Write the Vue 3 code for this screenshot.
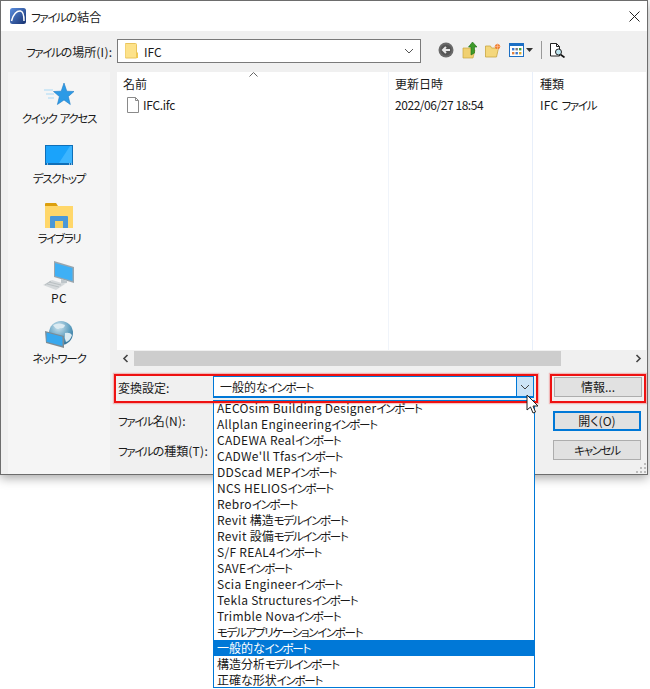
<script setup>
import { h } from 'vue'

const T = (props) =>
  (props.text.match(/[\u30A0-\u30FF]+|[\x20-\x7E]+|[^\u30A0-\u30FF\x20-\x7E]+/g) || []).map((run) => {
    if (/^[\u30A0-\u30FF]/.test(run)) return h('span', { class: 'kana' }, run)
    if (/^[\x20-\x7E]/.test(run)) return h('span', { class: 'latin' }, run)
    return h('span', run)
  })
T.props = ['text']

const places = [
  { label: 'クイック アクセス', icon: 'star' },
  { label: 'デスクトップ', icon: 'desk' },
  { label: 'ライブラリ', icon: 'lib' },
  { label: 'PC', icon: 'pc' },
  { label: 'ネットワーク', icon: 'net' }
]
const options = [
  'AECOsim Building Designerインポート', 'Allplan Engineeringインポート', 'CADEWA Realインポート',
  "CADWe'll Tfasインポート", 'DDScad MEPインポート', 'NCS HELIOSインポート', 'Rebroインポート',
  'Revit 構造モデルインポート', 'Revit 設備モデルインポート', 'S/F REAL4インポート', 'SAVEインポート',
  'Scia Engineerインポート', 'Tekla Structuresインポート', 'Trimble Novaインポート',
  'モデルアプリケーションインポート', '一般的なインポート', '構造分析モデルインポート', '正確な形状インポート'
]
</script>

<template>
  <div class="page">
    <div class="window">
      <header class="titlebar">
        <svg width="16" height="16" viewBox="0 0 16 16" class="appicon">
          <defs><linearGradient id="ag" x1="0" y1="0" x2="1" y2="1"><stop offset="0" stop-color="#5b8fe0"/><stop offset="1" stop-color="#16306e"/></linearGradient></defs>
          <rect width="16" height="16" rx="2.5" fill="url(#ag)"/>
          <path d="M1.500 13 C3 6 7 2.500 10.500 3 C13 3.400 14 7 14 13" fill="none" stroke="#fff" stroke-width="1.500"/>
        </svg>
        <span class="title"><T text="ファイルの結合" /></span>
        <svg class="close" width="11" height="11" viewBox="0 0 11 11"><path d="M.5.5l10 10M10.500.5l-10 10" stroke="#222" stroke-width="1"/></svg>
      </header>

      <div class="content">
        <div class="toolbar">
          <span class="loclabel"><T text="ファイルの場所(I):" /></span>
          <div class="locbox">
            <svg width="13" height="16" viewBox="0 0 13 16"><path d="M0 1.500Q0 .5 1 .5h9.500q1 0 1 1V15H1q-1 0-1-1z" fill="#fde28a" stroke="#e9c45c"/><path d="M11.500 9.500H13V15h-2z" fill="#f0c850"/></svg>
            <span class="locname">IFC</span>
            <svg class="chev" width="10" height="6" viewBox="0 0 10 6"><path d="M1 1l4 4 4-4" fill="none" stroke="#555" stroke-width="1"/></svg>
          </div>
          <div class="tools">
            <svg width="16" height="16" viewBox="0 0 16 16"><circle cx="8" cy="8" r="7.500" fill="#6a6a6a"/><circle cx="8" cy="8" r="5.500" fill="#555"/><path d="M12 8H6M8 5L5 8l3 3" fill="none" stroke="#e8e8e8" stroke-width="2"/></svg>
            <svg width="15" height="17" viewBox="0 0 15 17"><path d="M1 6h8l1 2h3l-2 8H1z" fill="#f0d070" stroke="#c9a640" stroke-width=".7"/><path d="M9 13V5H6.500L10.500 0 15 5h-2.500v6z" fill="#3d9a2a" stroke="#1f6f16" stroke-width=".6"/></svg>
            <svg width="16" height="15" viewBox="0 0 16 15"><path d="M.5 3h5l1 2h7l-2 9H.5z" fill="#f4d77c" stroke="#c9a640" stroke-width=".8"/><circle cx="12.500" cy="3.500" r="2.600" fill="#f08030"/><path d="M12.500 0v7M9 3.500h7" stroke="#fbc0a0" stroke-width=".6"/></svg>
            <span class="viewbtn">
              <svg width="15" height="14" viewBox="0 0 15 14"><rect x=".5" y=".5" width="14" height="13" fill="#fff" stroke="#1c6fc4"/><rect x="0" y="0" width="15" height="3" fill="#1c6fc4"/><rect x="3" y="5" width="2.400" height="2.400" fill="#3a78d0"/><rect x="6.500" y="5" width="2.400" height="2.400" fill="#7a7a7a"/><rect x="10" y="5" width="2.400" height="2.400" fill="#43a043"/><rect x="3" y="9" width="2.400" height="2.400" fill="#e08040"/><rect x="6.500" y="9" width="2.400" height="2.400" fill="#3a78d0"/><rect x="10" y="9" width="2.400" height="2.400" fill="#d9a830"/></svg>
              <svg width="7" height="4" viewBox="0 0 7 4"><path d="M0 0h7L3.500 4z" fill="#333"/></svg>
            </span>
            <span class="sep"></span>
            <svg width="16" height="15" viewBox="0 0 16 15"><path d="M.5.500h6l3 3V13H.5z" fill="#fff" stroke="#222"/><path d="M6.500.5v3h3" fill="none" stroke="#222"/><circle cx="8.500" cy="9" r="3" fill="#bfe6f0" stroke="#222"/><path d="M10.500 11.500l4 3" stroke="#111" stroke-width="1.600"/></svg>
          </div>
        </div>

        <div class="main">
          <nav class="sidebar">
            <div v-for="p in places" :key="p.label" class="place">
              <div class="placeicon">
                <svg v-if="p.icon === 'star'" width="31" height="26" viewBox="0 0 31 26"><path d="M0 8h9M2 12h8M4 16h6" stroke="#a9d9f5" stroke-width="1.200"/><path d="M20 1l2.800 8.200 7.200.3-5.700 5 2 8L20 18l-6.600 4.500 2-8L9.500 9.500l7.700-.3z" fill="#2c9ae6" stroke="#1e7cc6" stroke-width=".6"/></svg>
                <svg v-else-if="p.icon === 'desk'" width="28" height="20" viewBox="0 0 28 20"><rect width="28" height="20" fill="#0f6fb8"/><rect x="1" y="1" width="26" height="17" fill="#1aa3fb"/><path d="M14 18L25 1h2v17z" fill="#3cb5ff"/><path d="M2 19h1M24 19h1M26 19h1" stroke="#fff"/></svg>
                <svg v-else-if="p.icon === 'lib'" width="28" height="25" viewBox="0 0 28 25"><path d="M0 1q0-1 1-1h10l2 3h-13z" fill="#dc9f0e"/><rect x="0" y="3" width="28" height="22" fill="#ffd76a"/><path d="M5 25V14q0-1 1-1h16q1 0 1 1v11z" fill="#4a98d8"/><rect x="10" y="18" width="8" height="7" fill="#f6d160"/></svg>
                <svg v-else-if="p.icon === 'pc'" width="32" height="29" viewBox="0 0 32 29"><path d="M11 0l20 6v16l-20-6z" fill="#9aa6ae"/><path d="M12 2l17.500 5v13L12 15z" fill="#3fb0f5"/><path d="M18 18l6 2v2l-6 1z" fill="#bfc6ca"/><path d="M9 19l13 4-9 6L0 24z" fill="#d5d9db"/><path d="M6 21l12 3M4 23l12 3M8 20l-6 4" stroke="#aeb4b8" stroke-width=".7"/></svg>
                <svg v-else width="28" height="28" viewBox="0 0 28 28"><defs><radialGradient id="gl" cx=".4" cy=".25" r=".8"><stop offset="0" stop-color="#cfe4ee"/><stop offset=".6" stop-color="#5f9fc0"/><stop offset="1" stop-color="#2f6f96"/></radialGradient></defs><circle cx="16" cy="12" r="12" fill="url(#gl)"/><path d="M8 4q6-3 12 0-1 4-5 3-3 3-7-3zM20 12q5-1 7 2-2 6-6 7-2-4-1-9z" fill="#dcebf2"/><path d="M0 10l19 5v12L1 22z" fill="#7f8c94"/><path d="M1.500 11.500l16 4.300v9.200l-16-4.200z" fill="#38a8ee"/></svg>
              </div>
              <span class="placelabel"><T :text="p.label" /></span>
            </div>
          </nav>

          <div class="right">
            <div class="list">
              <svg class="sortcaret" width="9" height="5" viewBox="0 0 9 5"><path d="M.5 4.500L4.500.5l4 4" fill="none" stroke="#666"/></svg>
              <div class="cols heads">
                <span class="c1">名前</span><span class="c2">更新日時</span><span class="c3">種類</span>
              </div>
              <div class="cols row">
                <span class="c1 fname">
                  <svg width="12" height="16" viewBox="0 0 12 16"><path d="M.5.500h8l3 3v12H.5z" fill="#fff" stroke="#8a8a8a"/><path d="M8.500.5v3h3" fill="none" stroke="#8a8a8a"/></svg>
                  IFC.ifc
                </span>
                <span class="c2 date">2022/06/27 18:54</span><span class="c3"><T text="IFC ファイル" /></span>
              </div>
            </div>
            <div class="hscroll">
              <svg width="7" height="9" viewBox="0 0 7 9"><path d="M5.500 1L2 4.500 5.500 8" fill="none" stroke="#444" stroke-width="1.600"/></svg>
              <div class="track"><div class="thumb"></div></div>
              <svg width="7" height="9" viewBox="0 0 7 9"><path d="M1.500 1L5 4.500 1.500 8" fill="none" stroke="#444" stroke-width="1.600"/></svg>
            </div>
            <div class="form">
              <div class="fields">
                <div class="frow first">
                  <span class="flabel strong">変換設定:</span>
                  <div class="combo">
                    <span class="combotext"><T text="一般的なインポート" /></span>
                    <span class="combobtn"><svg width="10" height="6" viewBox="0 0 10 6"><path d="M1 1l4 4 4-4" fill="none" stroke="#444"/></svg></span>
                  </div>
                </div>
                <div class="frow"><span class="flabel"><T text="ファイル名(N):" /></span></div>
                <div class="frow"><span class="flabel"><T text="ファイルの種類(T):" /></span></div>
              </div>
              <div class="buttons">
                <button class="btn info">情報...</button>
                <button class="btn primary">開く(O)</button>
                <button class="btn last"><T text="キャンセル" /></button>
              </div>
            </div>
          </div>
        </div>
        <svg class="grip" width="10" height="10" viewBox="0 0 10 10"><path d="M8 0h2v2H8zM4 4h2v2H4zM8 4h2v2H8zM0 8h2v2H0zM4 8h2v2H4zM8 8h2v2H8z" fill="#bdbdbd"/></svg>
      </div>
    </div>

    <ul class="dropdown">
      <li v-for="o in options" :key="o" :class="{ sel: o === '一般的なインポート' }"><T :text="o" /></li>
    </ul>
    <div class="mark mark1"></div>
    <div class="mark mark2"></div>
    <svg class="cursor" width="14" height="20" viewBox="0 0 14 20"><path d="M1 1v15l3.500-3 2.500 6 2.500-1-2.500-6H12z" fill="#fff" stroke="#222"/></svg>
  </div>
</template>

<style>
html, body { margin: 0; background: #fff; }
.kana { font-size: 11.5px; letter-spacing: -1.3px; }
.latin { letter-spacing: .3px; }
</style>

<style scoped>
.page {
  position: relative;
  width: 650px;
  height: 689px;
  overflow: hidden;
  background: #fff;
  font-family: "Noto Sans CJK JP", "Liberation Sans", sans-serif;
  font-feature-settings: "palt";
  font-size: 12px;
  color: #1a1a1a;
}
.window {
  width: 648px;
  height: 475px;
  box-sizing: border-box;
  border: 1px solid #6d6d6d;
  display: flex;
  flex-direction: column;
  box-shadow: 0 3px 10px rgba(0, 0, 0, .35);
  background: #f0f0f0;
}
.titlebar {
  height: 30px;
  flex: none;
  background: #fff;
  display: flex;
  align-items: center;
  padding: 0 7px 0 9px;
}
.title { margin-left: 5px; font-size: 12px; }
.close { margin-left: auto; }
.content { flex: 1; position: relative; display: flex; flex-direction: column; padding-left: 7px; min-height: 0; }
.toolbar { height: 41px; flex: none; display: flex; align-items: center; }
.loclabel { width: 91px; margin-left: 18px; flex: none; white-space: nowrap; }
.locbox {
  width: 304px;
  height: 24px;
  box-sizing: border-box;
  border: 1px solid #7a7a7a;
  background: #fff;
  display: flex;
  align-items: center;
  padding: 0 6px 0 7px;
  margin-top: -1px;
}
.locname { margin-left: 6px; }
.chev { margin-left: auto; }
.tools { display: flex; align-items: center; margin-left: 17px; gap: 8px; margin-top: -3px; }
.viewbtn { display: flex; align-items: center; gap: 2px; }
.sep { width: 1px; height: 18px; background: #999; }
.main { flex: 1; display: flex; min-height: 0; }
.sidebar {
  width: 102px;
  flex: none;
  background: #f5f5f5;
  padding-top: 8px;
  box-sizing: border-box;
}
.place { height: 60px; display: flex; flex-direction: column; align-items: center; }
.placeicon { height: 30px; display: flex; align-items: center; justify-content: center; }
.placelabel { line-height: 16px; white-space: nowrap; }
.right { flex: 1; margin-left: 7px; display: flex; flex-direction: column; min-width: 0; }
.list { height: 278px; flex: none; margin-right: 1px; background: #fff; position: relative; padding-top: 3px; box-sizing: border-box;
  background-image: linear-gradient(#f0f4fa, #f0f4fa), linear-gradient(#e8effa, #e8effa);
  background-size: 1px 100%, 1px 100%;
  background-position: 271px 0, 415px 0;
  background-repeat: no-repeat; }
.sortcaret { position: absolute; left: 132px; top: 0; }
.cols { display: flex; }
.heads { height: 18px; line-height: 18px; }
.row { height: 18px; line-height: 18px; margin-top: 3px; }
.c1 { width: 278px; padding-left: 6px; box-sizing: border-box; flex: none; }
.c2 { width: 145px; flex: none; }
.c3 { flex: 1; }
.date { letter-spacing: -.45px; }
.fname { display: flex; align-items: center; padding-left: 10px; gap: 4px; letter-spacing: -.3px; }
.hscroll { height: 17px; display: flex; align-items: center; flex: none; padding: 0 5px; gap: 5px; }
.track { flex: 1; height: 17px; }
.thumb { width: 427px; height: 15px; margin: 1px 0 0 0; background: #cdcdcd; }
.form { flex: 1; display: flex; }
.fields { width: 433px; flex: none; padding-left: 1px; box-sizing: border-box; }
.frow { height: 30px; display: flex; align-items: center; white-space: nowrap; }
.frow.first { height: 26px; margin: 7px 0 5px; }
.flabel { width: 96px; flex: none; }
.strong { width: 95px; }
.combo {
  width: 321px;
  height: 22px;
  box-sizing: border-box;
  border: 1px solid #0078d7;
  border-bottom-width: 2px;
  background: #fff;
  display: flex;
  align-items: center;
  padding-left: 6px;
  position: relative;
}
.combotext { flex: 1; }
.combobtn { width: 16px; height: 100%; background: #cce4f7; border-left: 1px solid #0078d7; display: flex; align-items: center; justify-content: center; }
.buttons { flex: none; width: 88px; margin-left: 3px; display: flex; flex-direction: column; padding-top: 10px; }
.btn {
  height: 20px;
  width: 88px;
  box-sizing: border-box;
  border: 1px solid #adadad;
  background: #e1e1e1;
  font: inherit;
  font-feature-settings: "palt";
  color: inherit;
  padding: 0;
  line-height: 16px;
}
.btn.info { margin-left: 1px; }
.btn.primary { border: 2px solid #0078d7; margin-top: 14px; }
.btn.last { margin-top: 9px; }
.grip { position: absolute; right: 1px; bottom: 1px; }
.dropdown {
  position: absolute;
  left: 213px;
  top: 400px;
  width: 322px;
  height: 288px;
  box-sizing: border-box;
  margin: 0;
  padding: 0;
  list-style: none;
  border: 1px solid #0078d7;
  background: #fff;
  overflow: hidden;
}
.dropdown li { height: 16px; line-height: 15px; padding-left: 3px; white-space: nowrap; }
.dropdown li:first-child { margin-top: -1px; }
.dropdown li.sel { background: #0078d7; color: #fff; }
.mark { position: absolute; border: 2px solid #ee1111; box-sizing: border-box; box-shadow: 0 0 1px 1px rgba(238, 17, 17, .25); }
.mark1 { left: 114px; top: 374px; width: 424px; height: 29px; }
.mark2 { left: 550px; top: 374px; width: 96px; height: 29px; }
.cursor { position: absolute; left: 526px; top: 394px; }
</style>
